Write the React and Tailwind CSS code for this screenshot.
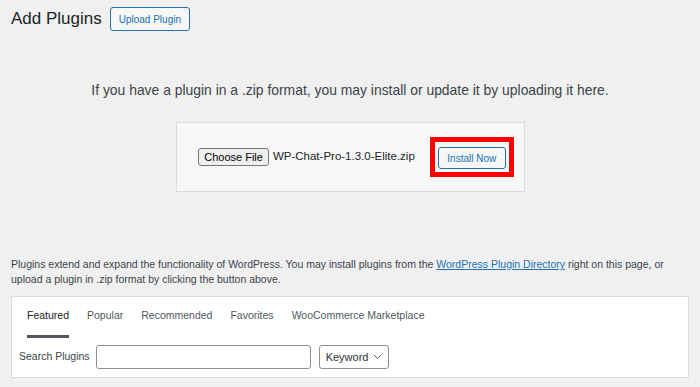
export default function App() {
  return (
    <div
      className="h-[387px] w-full overflow-hidden bg-[#f0f0f1] px-[11px] text-[#3c434a]"
      style={{ fontFamily: '"Liberation Sans", Arial, sans-serif' }}
    >
      {/* Header */}
      <div className="flex items-center gap-[8px] pt-[7px]">
        <h1 className="whitespace-nowrap text-[17px] leading-[24px] text-[#1d2327]">Add Plugins</h1>
        <button className="h-[24px] whitespace-nowrap rounded-[3px] border border-[#2271b1] bg-[#f6f7f7] px-[8px] text-[10px] text-[#2271b1]">
          Upload Plugin
        </button>
      </div>

      {/* Upload area */}
      <p className="mt-[50px] whitespace-nowrap text-center text-[13.9px] leading-[18px]">
        If you have a plugin in a .zip format, you may install or update it by uploading it here.
      </p>
      <div className="mx-auto mt-[23px] flex h-[70px] w-[349px] items-center justify-center border border-[#dcdcde] bg-[#f6f7f7] pl-[12px]">
        <button className="h-[18px] shrink-0 whitespace-nowrap rounded-[3px] border border-[#767676] bg-[#efefef] px-[5px] text-[11px] leading-[16px] text-black">
          Choose File
        </button>
        <span className="ml-[4px] shrink-0 whitespace-nowrap text-[11.5px] text-[#1d2327]">WP-Chat-Pro-1.3.0-Elite.zip</span>
        <div className="ml-[15px] shrink-0 border-[5px] border-[#ff0000] p-[3px]">
          <button className="h-[22px] w-[68px] whitespace-nowrap rounded-[3px] border border-[#2271b1] bg-[#f6f7f7] text-[10px] text-[#2271b1]">
            Install Now
          </button>
        </div>
      </div>

      {/* Description */}
      <p className="mt-[65px] text-[10.5px] leading-[15px] text-[#3c434a]">
        Plugins extend and expand the functionality of WordPress. You may install plugins from the{' '}
        <a className="text-[#2271b1] underline">WordPress Plugin Directory</a> right on this page, or
        upload a plugin in .zip format by clicking the button above.
      </p>

      {/* Filter card */}
      <div className="mt-[9px] border border-[#dcdcde] bg-white">
        <div className="flex gap-[18px] px-[15px] text-[10.5px] leading-[14px] text-[#50575e]">
          <span className="whitespace-nowrap border-b-[3px] border-[#50575e] pb-[13px] pt-[11px] text-[#1d2327]">Featured</span>
          <span className="whitespace-nowrap pt-[11px]">Popular</span>
          <span className="whitespace-nowrap pt-[11px]">Recommended</span>
          <span className="whitespace-nowrap pt-[11px]">Favorites</span>
          <span className="whitespace-nowrap pt-[11px]">WooCommerce Marketplace</span>
        </div>
        <div className="flex items-center px-[7px] pb-[8px] pt-[7px] text-[10.5px]">
          <span className="whitespace-nowrap text-[#3c434a]">Search Plugins</span>
          <input className="ml-[6px] h-[24px] w-[215px] rounded-[3px] border border-[#8c8f94] bg-white" />
          <div className="ml-[8px] flex h-[24px] items-center gap-[5px] whitespace-nowrap rounded-[3px] border border-[#8c8f94] bg-white px-[6px] text-[11px] text-[#2c3338]">
            Keyword
            <svg width="9" height="6" viewBox="0 0 9 6" fill="none" stroke="#50575e" strokeWidth="1">
              <path d="M1 1l3.5 3.5L8 1" />
            </svg>
          </div>
        </div>
      </div>
    </div>
  );
}
